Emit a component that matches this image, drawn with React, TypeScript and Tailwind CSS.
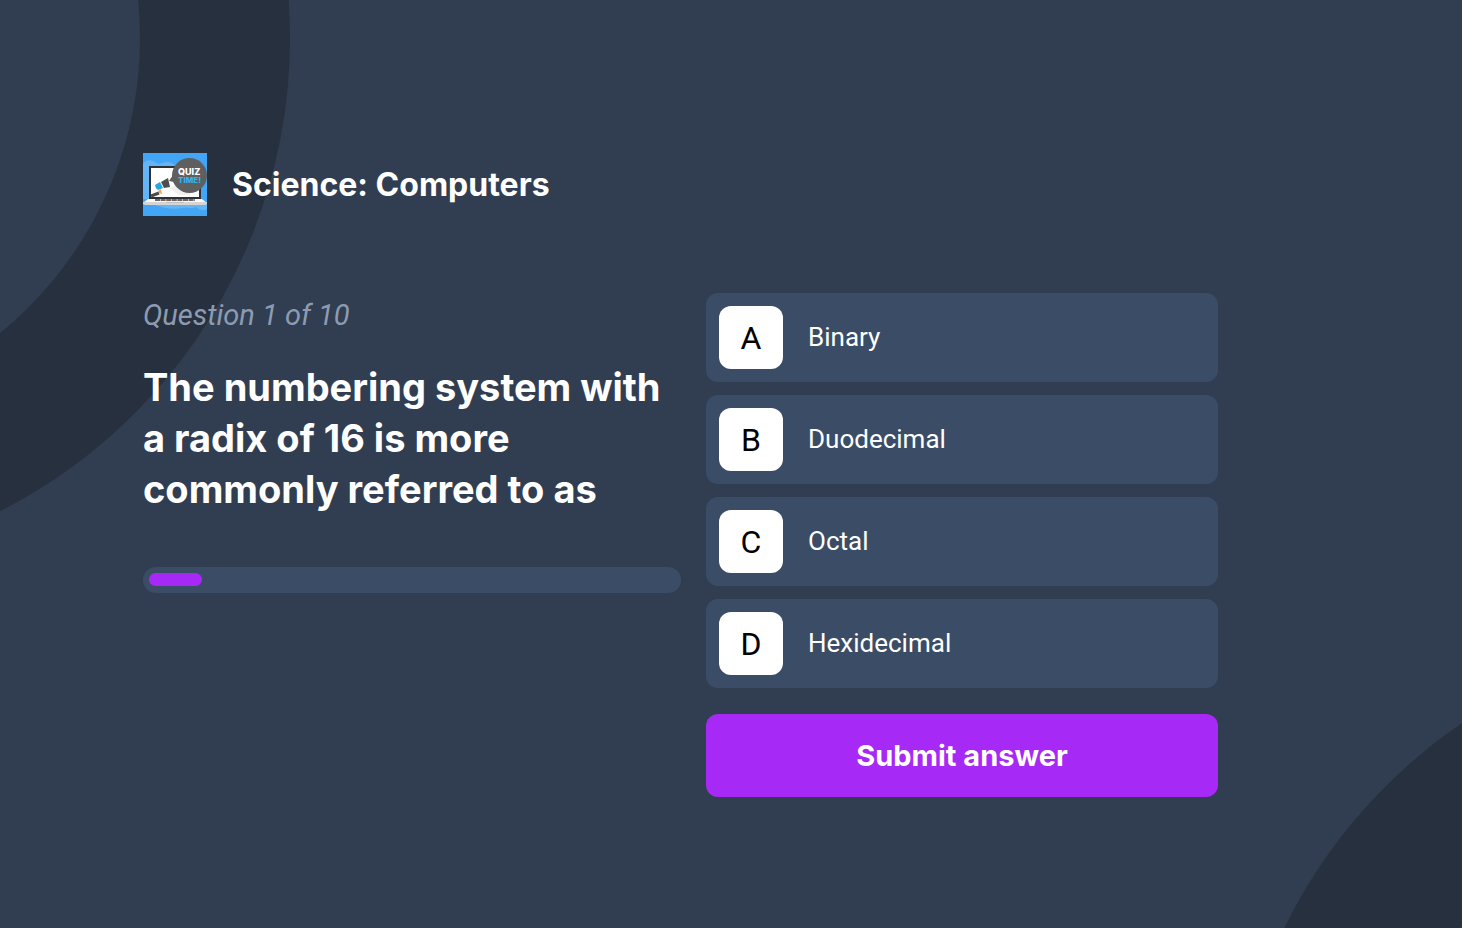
import { useState } from "react";

const options = [
  { letter: "A", label: "Binary" },
  { letter: "B", label: "Duodecimal" },
  { letter: "C", label: "Octal" },
  { letter: "D", label: "Hexidecimal" },
];

function QuizLogo() {
  return (
    <svg viewBox="0 0 64 63" className="h-[63px] w-16 shrink-0" role="img" aria-label="Quiz time">
      <rect width="64" height="63" fill="#42a5f5" />
      <path d="M0 11c2-4 8-5 12-2 2 2 4 2 7 1 5-2 11-1 13 3v33H0z" fill="#64b5f6" />
      <path d="M12 52c8 3 18 5 27 3 5-1 9 1 14-1 5 4 8 4 11 2v-5H12z" fill="#64b5f6" />
      <rect x="6" y="13" width="52" height="33" fill="#2f3135" />
      <rect x="8" y="15" width="48" height="29" fill="#fff" />
      <path d="M26 35 47 26v16H36z" fill="#f0f0f0" />
      <path d="M5 46h54l5 4H0z" fill="#fafafa" />
      <path d="M0 49h64v2q-1 1-3 1H3q-2 0-3-1z" fill="#d9d4d4" />
      <path d="M12 47h40" stroke="#3d3435" strokeWidth="1.4" strokeDasharray="5 .6" />
      <path d="M23 49.3h18" stroke="#bdbdbd" />
      <path d="m8 43 8-3" stroke="#4a4a4a" strokeWidth="3" />
      <path d="m15 38 3-2 1 5-3-1z" fill="#f0a35c" />
      <path d="m12 32 5-3 3 6-5 2q-3-2-3-5z" fill="#29a6df" />
      <path d="m18 29 7-4 2 9-6 1z" fill="#4d4d4d" />
      <path d="m30 22-4 6 5 1z" fill="#5d5d5d" />
      <circle cx="46.500" cy="22.500" r="17.500" fill="#5f5f5f" />
      <text x="35" y="22" fontFamily="Inter, sans-serif" fontSize="9" fontWeight="800" fill="#fff">QUIZ</text>
      <text x="35" y="30" fontFamily="Inter, sans-serif" fontSize="8" fontWeight="800" fill="#35b4ee">TIME!</text>
    </svg>
  );
}

export default function App() {
  const [selected, setSelected] = useState<string | null>(null);

  return (
    <div className="relative min-h-screen overflow-hidden bg-[#313e51] font-[Roboto,sans-serif] text-white">
      <div className="pointer-events-none absolute -top-[493px] -left-[772px] size-[1062px] rounded-full border-[150px] border-[#27303e]" />
      <div className="pointer-events-none absolute -right-[830px] -bottom-[765px] size-[1062px] rounded-full border-[150px] border-[#27303e]" />

      <main className="relative px-6 pt-[153px] pb-16 lg:pr-[244px] lg:pl-[143px]">
        <header className="flex items-center gap-[25px]">
          <QuizLogo />
          <p className="font-[Inter,sans-serif] text-[32px] leading-[38px] font-[650]">Science: Computers</p>
        </header>

        <div className="mt-[77px] grid gap-[25px] lg:grid-cols-[538fr_512fr]">
          <section>
            <p className="pt-[5px] text-[29px] leading-[34px] text-[#8d9bb1] italic">Question 1 of 10</p>
            <h1 className="mt-[30px] font-[Inter,sans-serif] text-[38px] leading-[51px] font-bold">
              The numbering system with a radix of 16 is more commonly referred to as
            </h1>
            <div
              role="progressbar"
              aria-label="Quiz progress"
              aria-valuemin={0}
              aria-valuemax={10}
              aria-valuenow={1}
              className="mt-[52px] h-[26px] rounded-full bg-[#3b4d66] p-1.5"
            >
              <div className="h-[13px] w-1/10 rounded-full bg-[#a729f5]" />
            </div>
          </section>

          <section className="flex flex-col gap-[13px]">
            {options.map(({ letter, label }) => (
              <button
                key={letter}
                type="button"
                aria-pressed={selected === letter}
                onClick={() => setSelected(letter)}
                className="flex items-center gap-[25px] rounded-xl bg-[#3b4d66] p-[13px] text-left"
              >
                <span className="flex h-[63px] w-16 items-center justify-center rounded-xl bg-white text-[32px] leading-[38px] text-black">
                  {letter}
                </span>
                <span className="text-[26px] leading-[31px]">{label}</span>
              </button>
            ))}
            <button
              type="button"
              className="mt-[13px] h-[83px] rounded-xl bg-[#a729f5] font-[Inter,sans-serif] text-[29px] leading-[34px] font-bold"
            >
              Submit answer
            </button>
          </section>
        </div>
      </main>
    </div>
  );
}
